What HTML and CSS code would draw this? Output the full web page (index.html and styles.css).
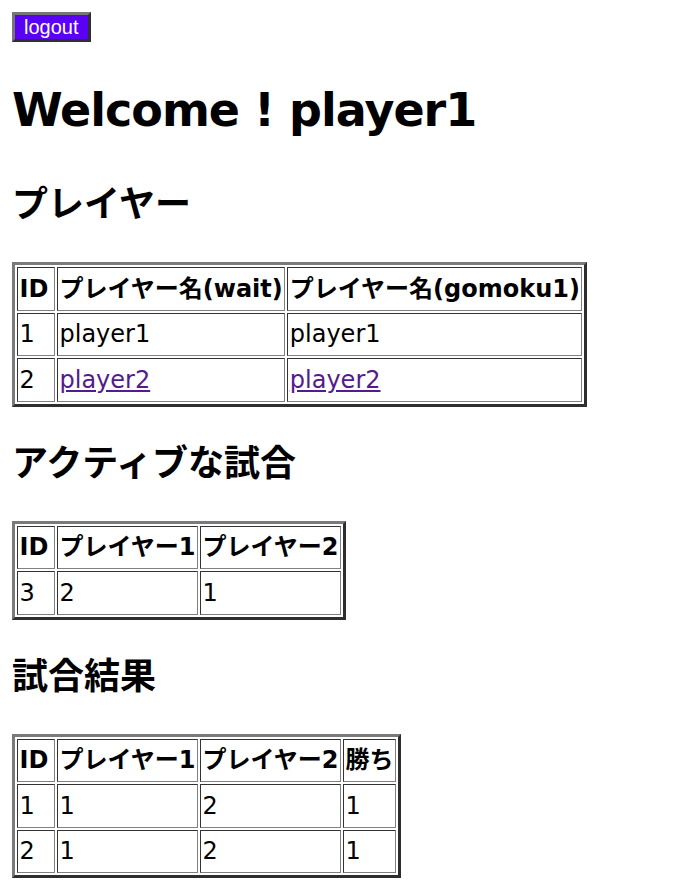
FILE: index.html
```html
<!DOCTYPE html>
<html lang="ja">
<head>
<meta charset="utf-8">
<title>Welcome</title>
<link rel="stylesheet" href="styles.css">
</head>
<body>
<div class="bar"><button class="logout" type="button">logout</button></div>
<h1 class="title">Welcome ! player1</h1>

<h2 class="section">プレイヤー</h2>
<table class="grid">
  <tr><th class="id">ID</th><th>プレイヤー名(wait)</th><th>プレイヤー名(gomoku1)</th></tr>
  <tr><td class="id">1</td><td>player1</td><td>player1</td></tr>
  <tr><td class="id">2</td><td><a class="plink" href="#">player2</a></td><td><a class="plink" href="#">player2</a></td></tr>
</table>

<h2 class="section">アクティブな試合</h2>
<table class="grid">
  <tr><th class="id">ID</th><th>プレイヤー1</th><th>プレイヤー2</th></tr>
  <tr><td class="id">3</td><td>2</td><td>1</td></tr>
</table>

<h2 class="section">試合結果</h2>
<table class="grid">
  <tr><th class="id">ID</th><th>プレイヤー1</th><th>プレイヤー2</th><th>勝ち</th></tr>
  <tr><td class="id">1</td><td>1</td><td>2</td><td>1</td></tr>
  <tr><td class="id">2</td><td>1</td><td>2</td><td>1</td></tr>
</table>
</body>
</html>
```

FILE: styles.css
```css
html, body {
  background: #ffffff;
}
body {
  margin: 12px;
  font-family: "DejaVu Sans", "Noto Sans CJK JP", sans-serif;
  font-size: 24px;
  line-height: 1.5;
  color: #000;
}
.bar {
  display: flex;
}
.logout {
  font-family: "Liberation Sans", Arial, sans-serif;
  font-size: 20px;
  line-height: 24px;
  padding: 0 9px;
  color: #ffffff;
  background: #5a00f5;
  border-style: solid;
  border-width: 3px;
  border-color: #767676 #303030 #303030 #767676;
  border-radius: 0;
  margin: 0;
}
.title {
  font-size: 46px;
  letter-spacing: -1px;
  line-height: 72px;
  font-weight: bold;
  margin: 32px 0;
}
.section {
  font-size: 36px;
  line-height: 54px;
  font-weight: bold;
  margin: 30px 0;
}
.grid {
  border-collapse: separate;
  border-spacing: 2px;
  border-style: solid;
  border-width: 3px;
  border-color: #7a7a7a #2e2e2e #2e2e2e #7a7a7a;
}
.grid th,
.grid td {
  padding: 2.75px 1.5px;
  border-style: solid;
  border-width: 1px;
  border-color: #333 #808080 #808080 #333;
  text-align: left;
  vertical-align: middle;
}
.grid th {
  font-weight: bold;
}
.grid .id {
  width: 33px;
}
.plink {
  color: #551a8b;
  text-decoration: underline;
}
```
